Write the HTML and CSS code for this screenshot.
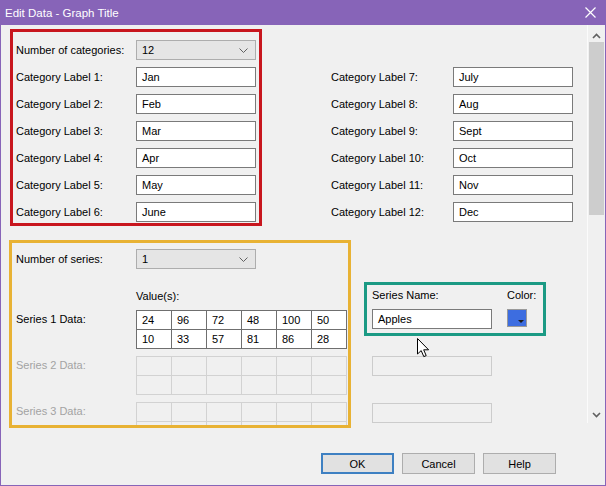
FILE: index.html
```html
<!DOCTYPE html>
<html lang="en">
<head>
    <meta charset="UTF-8">
    <title>Edit Data - Graph Title</title>
    <link rel="stylesheet" href="styles.css">
</head>
<body>
    <div class="window">
        <div class="titlebar">
            <span class="title">Edit Data - Graph Title</span>
            <svg class="close" width="11" height="11" viewBox="0 0 11 11"><path d="M0.5 0.5L10.5 10.5M10.5 0.5L0.5 10.5"/></svg>
        </div>

        <div class="client">
            <div class="pane">
                <div class="content">
                    <!-- categories -->
                    <div class="categories">
                        <div class="box box-red">
                            <div class="row">
                                <label>Number of categories:</label>
                                <div class="select">12<svg class="chev" width="9" height="5" viewBox="0 0 9 5"><path d="M0.5 0.5L4.5 4.5L8.5 0.5"/></svg></div>
                            </div>
                            <div class="row"><label>Category Label 1:</label><div class="input">Jan</div></div>
                            <div class="row"><label>Category Label 2:</label><div class="input">Feb</div></div>
                            <div class="row"><label>Category Label 3:</label><div class="input">Mar</div></div>
                            <div class="row"><label>Category Label 4:</label><div class="input">Apr</div></div>
                            <div class="row"><label>Category Label 5:</label><div class="input">May</div></div>
                            <div class="row"><label>Category Label 6:</label><div class="input">June</div></div>
                        </div>
                        <div class="col-right">
                            <div class="row"><label>Category Label 7:</label><div class="input">July</div></div>
                            <div class="row"><label>Category Label 8:</label><div class="input">Aug</div></div>
                            <div class="row"><label>Category Label 9:</label><div class="input">Sept</div></div>
                            <div class="row"><label>Category Label 10:</label><div class="input">Oct</div></div>
                            <div class="row"><label>Category Label 11:</label><div class="input">Nov</div></div>
                            <div class="row"><label>Category Label 12:</label><div class="input">Dec</div></div>
                        </div>
                    </div>

                    <!-- series -->
                    <div class="series">
                        <div class="box box-orange">
                            <div class="row">
                                <label>Number of series:</label>
                                <div class="select">1<svg class="chev" width="9" height="5" viewBox="0 0 9 5"><path d="M0.5 0.5L4.5 4.5L8.5 0.5"/></svg></div>
                            </div>
                            <div class="values-head">Value(s):</div>
                            <div class="series-list">
                                <div class="series-row">
                                    <label>Series 1 Data:</label>
                                    <div class="cells">
                                        <div>24</div><div>96</div><div>72</div><div>48</div><div>100</div><div>50</div>
                                        <div>10</div><div>33</div><div>57</div><div>81</div><div>86</div><div>28</div>
                                    </div>
                                </div>
                                <div class="series-row disabled">
                                    <label>Series 2 Data:</label>
                                    <div class="cells">
                                        <div></div><div></div><div></div><div></div><div></div><div></div>
                                        <div></div><div></div><div></div><div></div><div></div><div></div>
                                    </div>
                                </div>
                                <div class="series-row disabled">
                                    <label>Series 3 Data:</label>
                                    <div class="cells">
                                        <div></div><div></div><div></div><div></div><div></div><div></div>
                                        <div></div><div></div><div></div><div></div><div></div><div></div>
                                    </div>
                                </div>
                            </div>
                        </div>

                        <div class="series-side">
                            <div class="box box-green">
                                <div class="name-col">
                                    <label>Series Name:</label>
                                    <div class="input">Apples</div>
                                </div>
                                <div class="color-col">
                                    <label>Color:</label>
                                    <div class="swatch"><span class="swatch-arrow"></span></div>
                                </div>
                            </div>
                            <div class="input disabled first"></div>
                            <div class="input disabled"></div>
                        </div>
                    </div>
                </div>

                <div class="scrollbar">
                    <svg class="arrow" width="9" height="6" viewBox="0 0 9 6"><path d="M1 5L4.5 1.5L8 5"/></svg>
                    <div class="thumb"></div>
                    <div class="track"></div>
                    <svg class="arrow" width="9" height="6" viewBox="0 0 9 6"><path d="M1 1L4.5 4.5L8 1"/></svg>
                </div>
            </div>

            <div class="buttons">
                <button class="btn default">OK</button>
                <button class="btn">Cancel</button>
                <button class="btn">Help</button>
            </div>
        </div>

        <svg class="cursor" width="13" height="20" viewBox="0 0 13 20"><path d="M0.5 0.5L0.5 16L4.2 12.6L6.8 18.6L9.2 17.6L6.7 11.8L11.6 11.8Z"/></svg>
    </div>
</body>
</html>
```

FILE: styles.css
```css
body {
    margin: 0;
    font-family: 'Liberation Sans', Arial, sans-serif;
    font-size: 11px;
    color: #000;
    background: #f0f0f0;
}

.window {
    position: relative;
    width: 606px;
    height: 486px;
    box-sizing: border-box;
    border: 1px solid #8764b8;
    border-top: none;
    background: #f0f0f0;
    overflow: hidden;
}

.titlebar {
    height: 25px;
    margin: 0 -1px;
    background: #8764b8;
    color: #fff;
    display: flex;
    align-items: center;
    justify-content: space-between;
    padding: 0 10px 0 5px;
}

.title {
    font-size: 11.5px;
}

.close path {
    stroke: #fff;
    stroke-width: 1.2;
    fill: none;
}

.client {
    height: 460px;
    display: flex;
    flex-direction: column;
}

.pane {
    height: 398px;
    display: flex;
}

.content {
    flex: 1;
}

/* shared controls */
.row {
    display: flex;
    align-items: center;
    height: 20px;
}

.row label {
    width: 120px;
    flex-shrink: 0;
}

.input {
    width: 120px;
    height: 20px;
    box-sizing: border-box;
    border: 1px solid #7a7a7a;
    background: #fff;
    padding-left: 5px;
    line-height: 18px;
}

.input.disabled {
    border-color: #cccccc;
    background: #f0f0f0;
}

.select {
    width: 120px;
    height: 20px;
    box-sizing: border-box;
    border: 1px solid #adadad;
    background: #e5e5e5;
    padding: 0 7px 0 5px;
    line-height: 18px;
    display: flex;
    justify-content: space-between;
    align-items: center;
}

.chev path {
    stroke: #606060;
    fill: none;
    stroke-width: 1;
}

/* annotation boxes */
.box {
    box-sizing: border-box;
    border: 3px solid;
}

.box-red {
    border-color: #c8161e;
    width: 252px;
    height: 197px;
    margin-left: 9px;
    padding: 8px 3px 0 3px;
    display: flex;
    flex-direction: column;
    gap: 7px;
}

.box-orange {
    border-color: #e8b234;
    width: 342px;
    height: 188px;
    margin-left: 8px;
    padding: 6px 0 0 4px;
    overflow: hidden;
}

.box-green {
    border-color: #1b9a84;
    width: 182px;
    height: 54px;
    padding: 2px 0 0 5px;
    display: flex;
}

/* categories */
.categories {
    display: flex;
    margin-top: 4px;
}

.col-right {
    margin-left: 69px;
    padding-top: 38px;
    display: flex;
    flex-direction: column;
    gap: 7px;
}

.col-right .row label {
    width: 122px;
}

/* series */
.series {
    display: flex;
    margin-top: 14px;
}

.values-head {
    margin: 19px 0 0 120px;
    line-height: 16px;
}

.series-list {
    margin-top: 6px;
    display: flex;
    flex-direction: column;
    gap: 7px;
}

.series-row {
    display: flex;
}

.series-row label {
    width: 120px;
    flex-shrink: 0;
    padding-top: 1px;
    line-height: 16px;
}

.cells {
    display: grid;
    grid-template-columns: repeat(6, 35px);
    grid-auto-rows: 19px;
    border-left: 1px solid #6f6f6f;
    border-top: 1px solid #6f6f6f;
}

.cells div {
    background: #fff;
    border-right: 1px solid #6f6f6f;
    border-bottom: 1px solid #6f6f6f;
    padding-left: 5px;
    line-height: 18px;
}

.series-row.disabled label {
    color: #a3a3a3;
}

.series-row.disabled .cells {
    border-color: #d2d2d2;
}

.series-row.disabled .cells div {
    background: #f0f0f0;
    border-color: #d2d2d2;
}

.series-side {
    margin-left: 13px;
    padding-top: 42px;
}

.name-col {
    width: 120px;
    margin-right: 15px;
}

.name-col label,
.color-col label {
    display: block;
    line-height: 16px;
    margin-bottom: 6px;
}

.swatch {
    position: relative;
    width: 20px;
    height: 18px;
    margin-top: 2px;
    box-sizing: border-box;
    border: 1px solid #9a9a9a;
    background: #3d6de0;
}

.swatch-arrow {
    position: absolute;
    right: 2px;
    bottom: 3px;
    border-left: 3px solid transparent;
    border-right: 3px solid transparent;
    border-top: 3px solid #1a1a1a;
}

.series-side .input.disabled {
    margin-left: 8px;
}

.series-side .input.first {
    margin-top: 20px;
}

.series-side .input.disabled + .input.disabled {
    margin-top: 27px;
}

/* scrollbar */
.scrollbar {
    width: 17px;
    border-left: 1px solid #fbfbfb;
    display: flex;
    flex-direction: column;
    align-items: center;
    padding-top: 8px;
    box-sizing: content-box;
}

.scrollbar .arrow path {
    stroke: #606060;
    stroke-width: 1.6;
    fill: none;
}

.thumb {
    width: 15px;
    height: 173px;
    margin-top: 3px;
    background: #cdcdcd;
}

.track {
    flex: 1;
}

.scrollbar .arrow:last-child {
    margin-bottom: 5px;
}

/* buttons */
.buttons {
    flex: 1;
    display: flex;
    justify-content: flex-end;
    gap: 8px;
    padding: 30px 49px 0 0;
}

.btn {
    width: 73px;
    height: 21px;
    font-family: 'Liberation Sans', Arial, sans-serif;
    font-size: 11px;
    color: #000;
    background: #e1e1e1;
    border: 1px solid #adadad;
    padding: 0;
}

.btn.default {
    border-color: #3e80c2;
    box-shadow: inset 0 0 0 1px #3e80c2;
}

.cursor {
    position: absolute;
    left: 416px;
    top: 338px;
}

.cursor path {
    fill: #fff;
    stroke: #000;
    stroke-width: 1;
}
```
